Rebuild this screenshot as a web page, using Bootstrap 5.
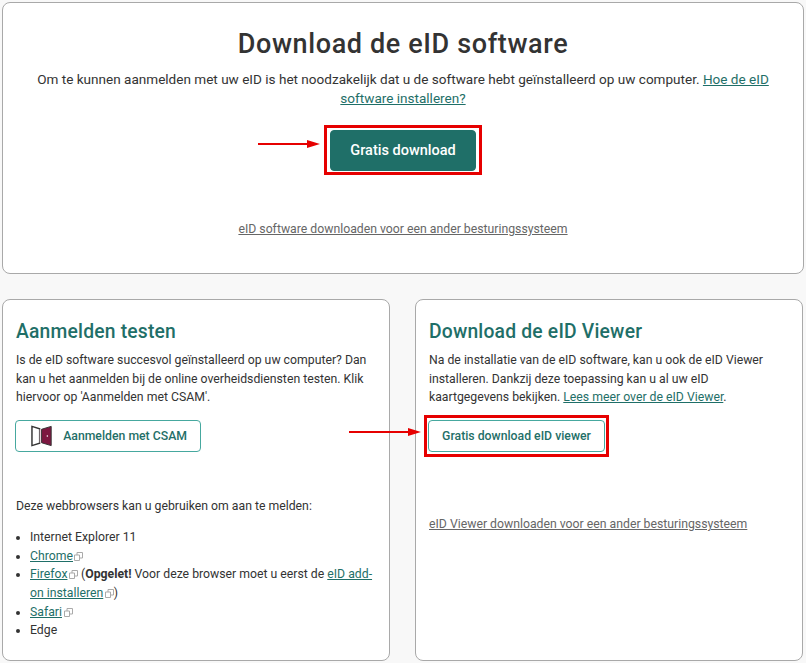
<!DOCTYPE html>
<html lang="nl">
<head>
<meta charset="utf-8">
<title>Download de eID software</title>
<link href="https://cdn.jsdelivr.net/npm/bootstrap@5.3.0/dist/css/bootstrap.min.css" rel="stylesheet">
<style>
html,body{height:663px;overflow:hidden}
body{background:#f8f8f8;font-family:Roboto,"Liberation Sans",sans-serif;font-size:12.25px;line-height:18.7px;color:#333;padding:2px 2px 0 2px}
a{color:#1f6f68}
.panel{background:#fff;border:1px solid #a9a9a9;border-radius:8px}
.panel-top{height:272px;padding:0 14px;text-align:center}
.panel-bottom{height:362px;padding:21px 13px 0}
.bottom-row{display:grid;grid-template-columns:388px 388px;column-gap:25px;margin-top:25px}
.main-title{font-size:27px;line-height:32px;font-weight:500;margin:25px 0 10px;color:#333;letter-spacing:.62px}
.sub-title{font-size:19.3px;line-height:22px;font-weight:500;color:#1f6f68;margin:0 0 8px;letter-spacing:.2px}
.intro{margin:0;font-size:13.55px}
.mark-box{position:relative;display:inline-block;border:3px solid #e60000;padding:2px 3px 1px}
.top-box{margin-top:18px;margin-bottom:45px}
.arrow{position:absolute;height:10px}
.arrow-top{left:-69px;width:62px;top:11px}
.arrow-view{left:-78px;width:72px;top:9px}
.btn-main{--bs-btn-bg:#1f6f68;--bs-btn-border-color:#1f6f68;--bs-btn-color:#fff;--bs-btn-hover-bg:#1f6f68;--bs-btn-hover-color:#fff;--bs-btn-border-radius:4px;font-size:14.5px;font-weight:500;width:146px;height:41px;padding:0;display:flex;align-items:center;justify-content:center}
.btn-line{--bs-btn-bg:#fff;--bs-btn-border-color:#46a89f;--bs-btn-color:#1f6f68;--bs-btn-border-radius:4px;font-size:12.25px;font-weight:500;height:32px;padding:0 13px;display:inline-flex;align-items:center;line-height:1;white-space:nowrap}
.muted-link{color:#666}
.top-link{font-size:12.25px}
.bullets{margin:0;padding-left:14px}
.ext{display:inline-block;width:9px;height:9px;margin-left:1.500px;vertical-align:-1px}
.browser-intro{margin:0 0 12px}
.csam-btn{width:186px;gap:11px;padding-left:15px;margin:13px 0 45px -1px}
.viewer-box{display:table;margin:8px 0 58px -5px;padding:2px 1px}
.viewer-btn{width:177px;justify-content:center;padding:0}
</style>
</head>
<body>
<main>
<section class="panel panel-top">
  <h1 class="main-title">Download de eID software</h1>
  <p class="intro">Om te kunnen aanmelden met uw eID is het noodzakelijk dat u de software hebt geïnstalleerd op uw computer. <a href="#">Hoe de eID software installeren?</a></p>
  <div class="d-flex justify-content-center">
    <div class="mark-box top-box">
      <svg class="arrow arrow-top" viewBox="0 0 62 10"><path d="M0 5H50" stroke="#e60000" stroke-width="2"/><path d="M49 1 62 5 49 9Z" fill="#e60000"/></svg>
      <a class="btn btn-main" href="#">Gratis download</a>
    </div>
  </div>
  <a class="muted-link top-link" href="#">eID software downloaden voor een ander besturingssysteem</a>
</section>
<div class="bottom-row">
  <section class="panel panel-bottom">
    <h2 class="sub-title">Aanmelden testen</h2>
    <p class="m-0">Is de eID software succesvol geïnstalleerd op uw computer? Dan kan u het aanmelden bij de online overheidsdiensten testen. Klik hiervoor op 'Aanmelden met CSAM'.</p>
    <a class="btn btn-line csam-btn" href="#">
      <svg width="22" height="22" viewBox="0 0 22 22"><path d="M1 1 9 3.500V18.500L1 21Z" fill="#fff" stroke="#333" stroke-width="1.500"/><path d="M9 4H11V18H9Z" fill="#e8cfd8"/><path d="M11 4 21 1V21L11 18Z" fill="#7d1740" stroke="#333" stroke-width="1"/><circle cx="17" cy="11" r=".8" fill="#fff"/></svg>
      Aanmelden met CSAM
    </a>
    <p class="browser-intro">Deze webbrowsers kan u gebruiken om aan te melden:</p>
    <ul class="bullets">
      <li>Internet Explorer 11</li>
      <li><a href="#">Chrome</a><svg class="ext" viewBox="0 0 9 9"><path d="M.5 3H5.500V8.500H.5ZM3 3V.5H8.500V6H5.500" fill="none" stroke="#aaa"/></svg></li>
      <li><a href="#">Firefox</a><svg class="ext" viewBox="0 0 9 9"><path d="M.5 3H5.500V8.500H.5ZM3 3V.5H8.500V6H5.500" fill="none" stroke="#aaa"/></svg> (<strong>Opgelet!</strong> Voor deze browser moet u eerst de <a href="#">eID add-on installeren</a><svg class="ext" viewBox="0 0 9 9"><path d="M.5 3H5.500V8.500H.5ZM3 3V.5H8.500V6H5.500" fill="none" stroke="#aaa"/></svg>)</li>
      <li><a href="#">Safari</a><svg class="ext" viewBox="0 0 9 9"><path d="M.5 3H5.500V8.500H.5ZM3 3V.5H8.500V6H5.500" fill="none" stroke="#aaa"/></svg></li>
      <li>Edge</li>
    </ul>
  </section>
  <section class="panel panel-bottom">
    <h2 class="sub-title">Download de eID Viewer</h2>
    <p class="m-0">Na de installatie van de eID software, kan u ook de eID Viewer installeren. Dankzij deze toepassing kan u al uw eID kaartgegevens bekijken. <a href="#">Lees meer over de eID Viewer</a>.</p>
    <div class="mark-box viewer-box">
      <svg class="arrow arrow-view" viewBox="0 0 72 10"><path d="M0 5H60" stroke="#e60000" stroke-width="2"/><path d="M59 1 72 5 59 9Z" fill="#e60000"/></svg>
      <a class="btn btn-line viewer-btn" href="#">Gratis download eID viewer</a>
    </div>
    <a class="muted-link" href="#">eID Viewer downloaden voor een ander besturingssysteem</a>
  </section>
</div>
</main>
<script src="https://cdn.jsdelivr.net/npm/bootstrap@5.3.0/dist/js/bootstrap.bundle.min.js"></script>
</body>
</html>
